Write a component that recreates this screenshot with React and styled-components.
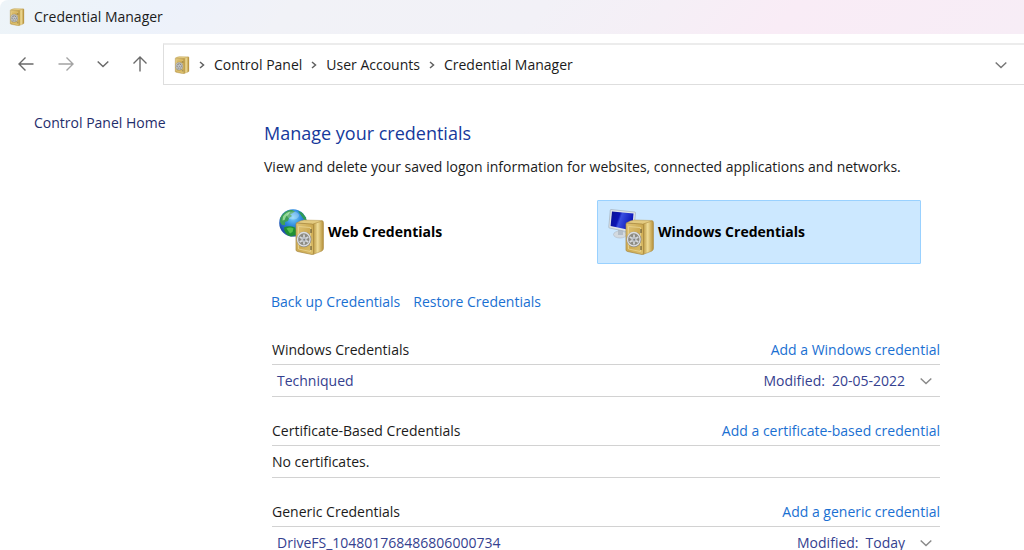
import React from 'react';
import styled, {createGlobalStyle} from 'styled-components';

const GlobalStyle = createGlobalStyle`
  * {
    box-sizing: border-box;
  }

  body {
    margin: 0;
    background: #fff;
    color: #1b1b1b;
    font: 14px/20px 'Segoe UI', 'Open Sans', 'Noto Sans', sans-serif;
  }

  button {
    border: 0;
    padding: 0;
    background: none;
    color: inherit;
    font: inherit;
  }
`;

const sections = [
  {
    title: 'Windows Credentials',
    action: 'Add a Windows credential',
    items: [{name: 'Techniqued', modified: '20-05-2022'}]
  },
  {
    title: 'Certificate-Based Credentials',
    action: 'Add a certificate-based credential',
    empty: 'No certificates.',
    items: []
  },
  {
    title: 'Generic Credentials',
    action: 'Add a generic credential',
    items: [{name: 'DriveFS_104801768486806000734', modified: 'Today'}]
  }
];

// Gradients shared by every icon on the page
function IconDefs() {
  return (
    <Defs aria-hidden="true">
      <linearGradient id="safe-front" x2="1" y2="1">
        <stop offset="0" stopColor="#e0c67c" />
        <stop offset=".5" stopColor="#cdaa52" />
        <stop offset="1" stopColor="#dcc06c" />
      </linearGradient>
      <linearGradient id="safe-side">
        <stop offset="0" stopColor="#b8943c" />
        <stop offset=".45" stopColor="#f0dd98" />
        <stop offset="1" stopColor="#b38d36" />
      </linearGradient>
      <radialGradient id="ocean" cx=".5" cy=".3" r=".75">
        <stop offset="0" stopColor="#7fd2fa" />
        <stop offset=".4" stopColor="#2f8be0" />
        <stop offset=".8" stopColor="#1a4cae" />
        <stop offset="1" stopColor="#5a78b4" />
      </radialGradient>
      <linearGradient id="screen" x2="1" y2=".3">
        <stop offset="0" stopColor="#0a1190" />
        <stop offset=".4" stopColor="#0c14b4" />
        <stop offset=".5" stopColor="#3a4fe0" />
        <stop offset="1" stopColor="#0a15b8" />
      </linearGradient>
    </Defs>
  );
}

// The safe is drawn in a 29x36 box so the small and large icons can share it
function SafeShape() {
  return (
    <g>
      <path d="M1.500 4Q5 1.500 9 1L27 1.500Q28 1.500 28 3L18 6Z" fill="#e3ca80" stroke="#b3944a" strokeWidth=".5" />
      <path d="M18 5 27 2Q28.500 2 28.500 4V29Q28.500 31 27 32L18 35.500Z" fill="url(#safe-side)" stroke="#a8873c" strokeWidth=".5" />
      <path d="M2 4 17 5Q18.500 5 18.500 7V34Q18.500 35.500 17 35.500L2.500 32.500Q1 32 1 31V5Q1 4 2 4Z" fill="url(#safe-front)" stroke="#a5853d" strokeWidth=".7" />
      <path d="M3.500 7.500 15.500 8.500V32.500L3.500 30Z" fill="none" stroke="#ead694" strokeWidth=".8" />
      <path d="M16 10V14M16 27V31" stroke="#6b5d38" strokeWidth="1.200" />
      <ellipse cx="9" cy="20.500" rx="7.400" ry="7.800" fill="#8c8a82" />
      <ellipse cx="8.800" cy="20.200" rx="6.300" ry="6.700" fill="none" stroke="#dcdee1" strokeWidth="1.300" />
      <path d="M9 15.500V25.500M4.700 18 13.300 23M4.700 23 13.300 18" stroke="#d4d7da" strokeWidth="1.700" />
      <ellipse cx="9" cy="20.500" rx="2.600" ry="2.800" fill="#bfc3c8" />
      <circle cx="9.200" cy="20.700" r="1" fill="#7d7f82" />
    </g>
  );
}

function SafeIcon() {
  return (
    <svg width="16" height="18" viewBox="0 0 29 36" aria-hidden="true">
      <SafeShape />
    </svg>
  );
}

function WebIcon() {
  return (
    <svg width="48" height="48" viewBox="0 0 48 48" aria-hidden="true">
      <circle cx="15" cy="15" r="13.800" fill="url(#ocean)" />
      <path d="M2.500 9.500C5 4.500 10 1.500 14 2L17 3.500 14 5.500 12 6 14 8 11 10 10 13 7 14 7 17 4 17 2 14Z" fill="#3f9f58" />
      <path d="M5 8.500C7 5.500 10 4 12.500 3.500L10 7 8 8.500 6.500 12 4.500 12.500Z" fill="#93d998" />
      <path d="M6 19.500Q11 17 17 19.500L18 22V27L13 28.500C9 27.500 6 24.500 6 19.500Z" fill="#1f8f35" />
      <path d="M8.500 20.500Q12 18.500 15.500 20.500L14.500 24 12 25.500Z" fill="#55c14e" />
      <path d="M20 3 24 4.500 28 9.500 28.500 13 25.500 11 23 7.500Z" fill="#2f9a55" />
      <ellipse cx="15" cy="7.500" rx="6" ry="4" fill="#fff" opacity=".25" />
      <g transform="translate(17 11)">
        <SafeShape />
      </g>
    </svg>
  );
}

function ComputerIcon() {
  return (
    <svg width="48" height="48" viewBox="0 0 48 48" aria-hidden="true">
      <ellipse cx="12" cy="26.500" rx="6.500" ry="3.500" fill="#d3dae0" stroke="#aeb8c2" strokeWidth=".6" />
      <path d="M10 20 15 22V27H10Z" fill="#b4bec8" />
      <path d="M3 1.500 26.500 4Q27.500 4 27.500 5L25.500 25 1.500 20Q.7 20 .8 19L2.300 2Q2.400 1.500 3 1.500Z" fill="#dfe4e8" stroke="#9aa8b4" strokeWidth=".6" />
      <path d="M4 3.500 25.500 5.500 24 22.500 2.600 18Z" fill="url(#screen)" />
      <g transform="translate(17 11)">
        <SafeShape />
      </g>
    </svg>
  );
}

function Arrow({d}) {
  return (
    <svg width="18" height="18" viewBox="0 0 18 18" fill="none" stroke="currentColor" strokeWidth="1.400" aria-hidden="true">
      <path d={d} />
    </svg>
  );
}

function Chevron({right}) {
  return right ? (
    <svg width="6" height="8" viewBox="0 0 6 8" fill="none" stroke="#606060" strokeWidth="1.500" aria-hidden="true">
      <path d="M1 1 4.500 4 1 7" />
    </svg>
  ) : (
    <svg width="12" height="8" viewBox="0 0 12 8" fill="none" stroke="currentColor" strokeWidth="1.500" aria-hidden="true">
      <path d="M.7 1.500 6 6.500 11.300 1.500" />
    </svg>
  );
}

export default function App() {
  return (
    <Window>
      <GlobalStyle />
      <IconDefs />
      <TitleBar>
        <SafeIcon />
        Credential Manager
      </TitleBar>

      <Toolbar>
        <NavButtons>
          <NavButton aria-label="Back"><Arrow d="M16.500 9H2M8.500 2.500 2 9 8.500 15.500" /></NavButton>
          <NavButton aria-label="Forward" muted><Arrow d="M1.500 9H16M9.500 2.500 16 9 9.500 15.500" /></NavButton>
          <NavButton aria-label="Recent locations" narrow><Chevron /></NavButton>
          <NavButton aria-label="Up"><Arrow d="M9 16.500V2M2.500 8.500 9 2 15.500 8.500" /></NavButton>
        </NavButtons>
        <AddressBar aria-label="Address">
          <SafeIcon />
          <Chevron right />
          <Crumb href="#">Control Panel</Crumb>
          <Chevron right />
          <Crumb href="#">User Accounts</Crumb>
          <Chevron right />
          <Crumb href="#">Credential Manager</Crumb>
          <History aria-label="Previous locations"><Chevron /></History>
        </AddressBar>
      </Toolbar>

      <Body>
        <Sidebar>
          <HomeLink href="#">Control Panel Home</HomeLink>
        </Sidebar>
        <Main>
          <Heading>Manage your credentials</Heading>
          <Intro>View and delete your saved logon information for websites, connected applications and networks.</Intro>

          <Vaults>
            <Vault>
              <WebIcon />
              Web Credentials
            </Vault>
            <Vault selected>
              <ComputerIcon />
              Windows Credentials
            </Vault>
          </Vaults>

          <Actions>
            <Link href="#">Back up Credentials</Link>
            <Link href="#">Restore Credentials</Link>
          </Actions>

          {sections.map(section => (
            <Section key={section.title}>
              <SectionHeader>
                <SectionTitle>{section.title}</SectionTitle>
                <Link href="#">{section.action}</Link>
              </SectionHeader>
              {section.empty && <Row>{section.empty}</Row>}
              {section.items.map(item => (
                <Row key={item.name} item>
                  <span>{item.name}</span>
                  <Modified>
                    <span>Modified:</span>
                    <span>{item.modified}</span>
                    <Expand aria-label={`Show ${item.name}`}><Chevron /></Expand>
                  </Modified>
                </Row>
              ))}
            </Section>
          ))}
        </Main>
      </Body>
    </Window>
  );
}

const Window = styled.div`
  height: 100vh;
  overflow: hidden;
`;

const Defs = styled.svg`
  position: absolute;
  width: 0;
  height: 0;
`;

const TitleBar = styled.header`
  display: flex;
  align-items: center;
  gap: 9px;
  height: 34px;
  padding-left: 9px;
  border-top-left-radius: 8px;
  background: linear-gradient(130deg, #edf4f8 0%, #edf2fb 16%, #f1f2f7 28%, #f2f1f7 52%, #f5eff6 64%, #f9ecf6 76%, #f7edf6 100%);
`;

const Toolbar = styled.div`
  display: flex;
  padding-top: 9px;
`;

const NavButtons = styled.div`
  display: flex;
  align-items: center;
  gap: 20px;
  width: 163px;
  padding-left: 16px;
`;

const NavButton = styled.button.withConfig({
  shouldForwardProp: prop => !['muted', 'narrow'].includes(prop)
})`
  display: flex;
  justify-content: center;
  width: ${props => (props.narrow ? '14px' : '20px')};
  color: ${props => (props.muted ? '#a3a3a3' : '#6a6a6a')};
`;

const AddressBar = styled.nav`
  display: flex;
  flex: 1;
  align-items: center;
  gap: 9px;
  height: 42px;
  padding: 0 17px 0 10px;
  border: 1px solid #dedede;
  border-top: 2px solid #ececec;
  border-right: 0;
`;

const Crumb = styled.a`
  color: #1b1b1b;
  text-decoration: none;
`;

const History = styled.button`
  display: flex;
  margin-left: auto;
  color: #777;
`;

const Body = styled.div`
  display: flex;
`;

const Sidebar = styled.aside`
  width: 264px;
  padding: 28px 0 0 34px;
`;

const HomeLink = styled.a`
  color: #1f2d6b;
  text-decoration: none;
`;

const Main = styled.main`
  flex: 1;
  padding: 36px 84px 0 0;
`;

const Heading = styled.h1`
  margin: 0 0 12px;
  color: #16399c;
  font-size: 18px;
  font-weight: 400;
  line-height: 24px;
`;

const Intro = styled.p`
  margin: 0 0 23px;
  white-space: nowrap;
`;

const Vaults = styled.div`
  display: grid;
  grid-template-columns: 1fr 1fr;
  gap: 6px;
  padding: 0 19px 0 3px;
`;

const Vault = styled.button.withConfig({
  shouldForwardProp: prop => prop !== 'selected'
})`
  display: flex;
  align-items: center;
  gap: 2px;
  height: 64px;
  padding-left: 10px;
  border: 1px solid ${props => (props.selected ? '#99d1ff' : 'transparent')};
  border-radius: 1px;
  background: ${props => (props.selected ? '#cce8ff' : 'none')};
  color: #000;
  font-weight: 700;
`;

const Link = styled.a`
  color: #1a70d2;
  text-decoration: none;
`;

const Actions = styled.div`
  display: flex;
  gap: 13px;
  margin: 28px 0 23px;
  padding-left: 7px;
`;

const Section = styled.section`
  margin: 0 0 19px 8px;
`;

const SectionHeader = styled.div`
  display: flex;
  align-items: center;
  justify-content: space-between;
  height: 30px;
  border-bottom: 1px solid #d2d2d2;
`;

const SectionTitle = styled.h2`
  margin: 0;
  font-size: 14px;
  font-weight: 400;
`;

const Row = styled.div.withConfig({
  shouldForwardProp: prop => prop !== 'item'
})`
  display: flex;
  align-items: center;
  justify-content: space-between;
  height: 32px;
  padding: ${props => (props.item ? '0 8px 0 5px' : '0')};
  border-bottom: 1px solid #d2d2d2;
  color: ${props => (props.item ? '#35418f' : 'inherit')};
`;

const Modified = styled.div`
  display: flex;
  align-items: center;
  gap: 7px;
`;

const Expand = styled.button`
  display: flex;
  margin-left: 8px;
  color: #8a8a8a;
`;
